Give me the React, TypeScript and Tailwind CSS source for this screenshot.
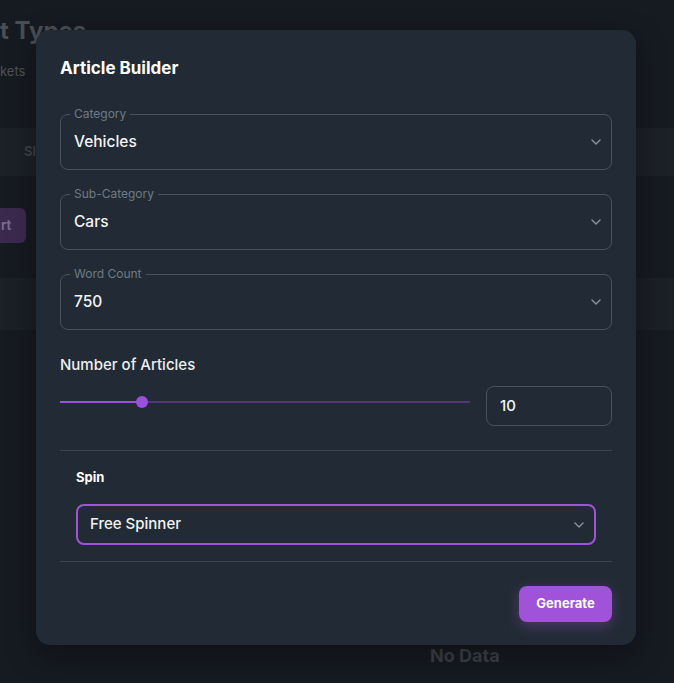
import React from "react";

function Chevron() {
  return (
    <svg width="10" height="6" viewBox="0 0 10 6" fill="none" className="shrink-0">
      <path d="M1 1l4 4 4-4" stroke="#8a949e" strokeWidth="1.4" strokeLinecap="round" strokeLinejoin="round" />
    </svg>
  );
}

function OutlinedSelect({ label, value }: { label: string; value: string }) {
  return (
    <div className="relative h-[56px] rounded-[8px] border border-[#47525d] flex items-center justify-between pl-[13px] pr-[10px]">
      <span className="absolute left-[9px] top-[-8px] px-[4px] bg-[#222b35] text-[12px] leading-[14px] text-[#6f7a84]">{label}</span>
      <span className="text-[15.5px] font-medium text-[#f3f4f6]">{value}</span>
      <Chevron />
    </div>
  );
}

export default function App() {
  return (
    <div
      className="relative w-[674px] h-[683px] overflow-hidden bg-[#161a21]"
      style={{ fontFamily: "Inter, 'Noto Sans', sans-serif" }}
    >
      {/* dimmed background page */}
      <div className="flex flex-col">
        <div className="h-[128px] pt-[16px]">
          <div className="text-[24px] font-bold text-[#4a4e55] leading-[30px]">t Types</div>
          <div className="mt-[16px] text-[13px] text-[#4d5158]">kets</div>
        </div>
        <div className="h-[48px] bg-[#1c2027] flex items-center pl-[24px] text-[13px] font-semibold text-[#3f434a]">Sl</div>
        <div className="h-[102px] flex flex-col">
          <div className="mt-[32px] w-[26px] h-[35px] rounded-r-[6px] bg-[#3b2a4e] flex items-center pl-[1px] text-[13px] font-bold text-[#7c6a92]">rt</div>
        </div>
        <div className="h-[52px] bg-[#1b1f26]" />
      </div>
      <div className="absolute left-[430px] top-[642px] text-[18px] font-bold text-[#3c3f45]">No Data</div>

      {/* modal */}
      <div className="absolute left-[36px] top-[30px] w-[600px] h-[615px] rounded-[14px] bg-[#222b35] shadow-[0_10px_30px_rgba(0,0,0,0.35)] px-[24px] pt-[27px]">
        <h2 className="text-[17px] font-bold text-white leading-[22px] m-0">Article Builder</h2>

        <div className="mt-[35px] flex flex-col gap-[24px]">
          <OutlinedSelect label="Category" value="Vehicles" />
          <OutlinedSelect label="Sub-Category" value="Cars" />
          <OutlinedSelect label="Word Count" value="750" />
        </div>

        <div className="mt-[25px] text-[15px] font-medium text-[#eceef0] leading-[20px]">Number of Articles</div>
        <div className="mt-[11px] flex items-start gap-[16px]">
          <div className="relative flex-1 h-[40px]">
            <div className="absolute left-0 right-0 top-[15px] h-[2px] bg-[#54377a]" />
            <div className="absolute left-0 top-[15px] w-[82px] h-[2px] bg-[#9b4fdc]" />
            <div className="absolute left-[76px] top-[10px] w-[12px] h-[12px] rounded-full bg-[#9b4fdc]" />
          </div>
          <div className="w-[126px] h-[40px] rounded-[8px] border border-[#47525d] flex items-center px-[13px] text-[15px] font-medium text-[#f3f4f6]">10</div>
        </div>

        <div className="mt-[24px] h-px bg-[#3a454f]" />

        <div className="px-[16px]">
          <div className="mt-[18px] text-[13px] font-bold text-white leading-[16px]">Spin</div>
          <div className="mt-[19px] h-[41px] rounded-[8px] border-2 border-[#a052d8] flex items-center justify-between pl-[12px] pr-[10px]">
            <span className="text-[15px] font-medium text-[#f3f4f6]">Free Spinner</span>
            <Chevron />
          </div>
        </div>

        <div className="mt-[16px] h-px bg-[#3a454f]" />

        <div className="mt-[24px] flex justify-end">
          <button className="h-[36px] w-[93px] rounded-[8px] bg-[#a052d8] text-[13px] font-bold text-white shadow-[0_4px_14px_rgba(160,82,216,0.35)]">
            Generate
          </button>
        </div>
      </div>
    </div>
  );
}
